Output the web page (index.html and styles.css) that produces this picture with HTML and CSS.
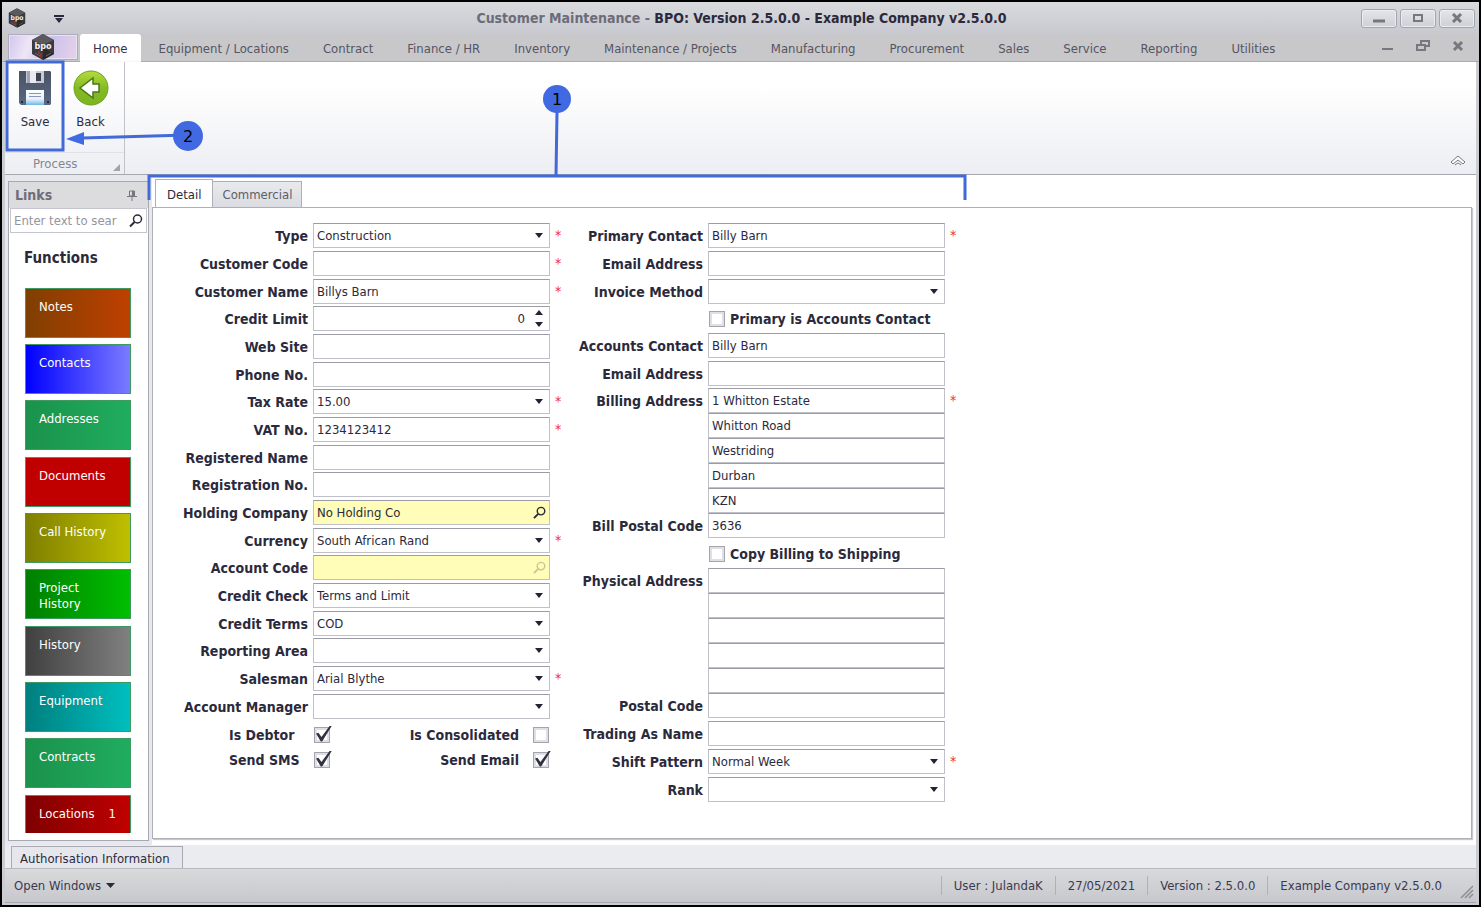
FILE: index.html
```html
<!DOCTYPE html>
<html lang="en">
<head>
    <meta charset="UTF-8">
    <meta name="viewport" content="width=device-width, initial-scale=1.0">
    <title>Customer Maintenance - BPO: Version 2.5.0.0</title>
    <link rel="stylesheet" href="styles.css">
</head>
<body>
    <!-- Shared icons -->
    <svg class="sprite" width="0" height="0" aria-hidden="true">
        <symbol id="logo" viewBox="0 0 24 26">
            <polygon points="12,0 23,6 23,20 12,26 1,20 1,6" fill="#3b3a3e"/>
            <polygon points="12,0 23,6 12,11 1,6" fill="#5b595d"/>
            <polygon points="12,14 23,20 12,26" fill="#2a292c"/>
            <path d="M4 19l5 3M15 22l5-3" stroke="#69676b"/>
            <path d="M8 17v3M10 19v4" stroke="#a02a2a" stroke-width="2"/>
        </symbol>
        <symbol id="search" viewBox="0 0 14 14">
            <circle cx="8.5" cy="5" r="4" fill="none" stroke="currentColor" stroke-width="1.5"/>
            <path d="M5.5 8L1 12.5" stroke="currentColor" stroke-width="2"/>
        </symbol>
    </svg>

    <div class="window">
        <header class="titlebar">
            <div class="quick">
                <svg class="quick-logo" viewBox="0 0 24 26">
                    <use href="#logo" width="24" height="26"/>
                    <text x="12" y="15" text-anchor="middle">bpo</text>
                </svg>
                <button class="quick-menu" aria-label="Customise toolbar">
                    <svg width="10" height="8"><path d="M0 0h10v2H0zM1 3h8L5 8z" fill="#2b2a3c"/></svg>
                </button>
            </div>
            <h1 class="title"><span>Customer Maintenance -</span> BPO: Version 2.5.0.0 - Example Company v2.5.0.0</h1>
            <div class="window-buttons">
                <button aria-label="Minimise"><svg width="12" height="10"><path d="M0 8h12" stroke="#77777f" stroke-width="3"/></svg></button>
                <button aria-label="Maximise"><svg width="12" height="10"><rect x="2" y="2" width="8" height="6" fill="none" stroke="#77777f" stroke-width="2"/></svg></button>
                <button aria-label="Close"><svg width="12" height="10"><path d="M2 1l8 8M10 1l-8 8" stroke="#77777f" stroke-width="3"/></svg></button>
            </div>
        </header>

        <nav class="tabs">
            <button class="app-button" aria-label="Application menu">
                <svg viewBox="0 0 24 26">
                    <use href="#logo" width="24" height="26"/>
                    <text x="12" y="15" text-anchor="middle">bpo</text>
                </svg>
            </button>
            <a class="tab active" href="#">Home</a>
            <a class="tab" href="#">Equipment / Locations</a>
            <a class="tab" href="#">Contract</a>
            <a class="tab" href="#">Finance / HR</a>
            <a class="tab" href="#">Inventory</a>
            <a class="tab" href="#">Maintenance / Projects</a>
            <a class="tab" href="#">Manufacturing</a>
            <a class="tab" href="#">Procurement</a>
            <a class="tab" href="#">Sales</a>
            <a class="tab" href="#">Service</a>
            <a class="tab" href="#">Reporting</a>
            <a class="tab" href="#">Utilities</a>
            <div class="child-buttons">
                <button aria-label="Minimise child"><svg width="14" height="12"><path d="M1 9h11" stroke="#77777f" stroke-width="2"/></svg></button>
                <button aria-label="Restore child"><svg width="14" height="12"><path d="M5 4V1h8v5h-3M1 5h8v5H1z" fill="none" stroke="#77777f" stroke-width="2"/></svg></button>
                <button aria-label="Close child"><svg width="14" height="12"><path d="M3 2l8 8M11 2l-8 8" stroke="#77777f" stroke-width="3"/></svg></button>
            </div>
        </nav>

        <section class="ribbon">
            <div class="group">
                <div class="group-buttons">
                    <button class="tool">
                        <svg width="34" height="36" viewBox="0 0 34 36">
                            <defs>
                                <linearGradient id="disk" x2="0" y2="1"><stop stop-color="#4b5263"/><stop offset="1" stop-color="#596985"/></linearGradient>
                                <linearGradient id="paper" x2="0" y2="1"><stop stop-color="#fff"/><stop offset=".6" stop-color="#e9f3fa"/><stop offset="1" stop-color="#6fb6e4"/></linearGradient>
                            </defs>
                            <path d="M1 1h31l1 1v32l-1 1H3l-2-2z" fill="url(#disk)"/>
                            <path d="M8 1h18v12H8z" fill="#c6cad4"/>
                            <path d="M9 1h9v12H9z" fill="#9da4b5"/>
                            <path d="M12 1h6v12h-6z" fill="#e8eaf0"/>
                            <path d="M18 3h5v8h-5z" fill="#3c4254"/>
                            <path d="M8 20h18v15H8z" fill="url(#paper)"/>
                            <path d="M11 23.5h12M11 26.500h12" stroke="#8f93c0"/>
                            <path d="M3 31h2v2H3zM29 31h2v2h-2z" fill="#252a38"/>
                        </svg>
                        Save
                    </button>
                    <button class="tool">
                        <svg width="36" height="36" viewBox="0 0 36 36">
                            <defs><linearGradient id="green" x2="0" y2="1"><stop stop-color="#b5dc3c"/><stop offset=".5" stop-color="#84bb25"/><stop offset="1" stop-color="#7db51f"/></linearGradient></defs>
                            <circle cx="18" cy="18" r="17" fill="url(#green)" stroke="#6f9f25"/>
                            <path d="M7 18L20 8v6h6v8h-6v6z" fill="#fff" stroke="#4c7719" stroke-width="1.5"/>
                        </svg>
                        Back
                    </button>
                </div>
                <div class="group-name">Process <svg width="7" height="7"><path d="M7 0v7H0z" fill="#a2a3a9"/></svg></div>
            </div>
            <button class="collapse" aria-label="Collapse ribbon">
                <svg width="16" height="12"><path d="M1 8l7-6 7 6-2 2-5-4-5 4zM5 11l3-2 3 2" fill="#fff" stroke="#77787f"/></svg>
            </button>
        </section>

        <main class="workspace">
            <aside class="links">
                <div class="links-head">Links
                    <svg width="10" height="11"><path d="M2.500 1h5v5h-5zM0 6.500h10M5 7v4" fill="none" stroke="#77787f"/><path d="M5 1h3v5H5z" fill="#77787f"/></svg>
                </div>
                <div class="search">
                    <input type="text" placeholder="Enter text to sear" aria-label="Search links">
                    <svg width="14" height="14"><use href="#search"/></svg>
                </div>
                <h2>Functions</h2>
                <div class="tiles">
                    <button class="tile brown">Notes</button>
                    <button class="tile blue">Contacts</button>
                    <button class="tile green">Addresses</button>
                    <button class="tile red">Documents</button>
                    <button class="tile olive">Call History</button>
                    <button class="tile lime">Project History</button>
                    <button class="tile grey">History</button>
                    <button class="tile teal">Equipment</button>
                    <button class="tile green">Contracts</button>
                    <button class="tile darkred">Locations <span>1</span></button>
                </div>
            </aside>

            <section class="page">
                <div class="page-tabs">
                    <button class="page-tab active">Detail</button>
                    <button class="page-tab">Commercial</button>
                </div>
                <form class="form">
                    <div class="column">
                        <div class="field required"><label for="type">Type</label><div class="box drop"><select id="type"><option>Construction</option></select></div></div>
                        <div class="field required"><label for="code">Customer Code</label><div class="box"><input id="code" type="text"></div></div>
                        <div class="field required"><label for="name">Customer Name</label><div class="box"><input id="name" type="text" value="Billys Barn"></div></div>
                        <div class="field"><label for="limit">Credit Limit</label><div class="box spin"><input id="limit" type="text" value="0"></div></div>
                        <div class="field"><label for="web">Web Site</label><div class="box"><input id="web" type="text"></div></div>
                        <div class="field"><label for="phone">Phone No.</label><div class="box"><input id="phone" type="text"></div></div>
                        <div class="field required"><label for="tax">Tax Rate</label><div class="box drop"><select id="tax"><option>15.00</option></select></div></div>
                        <div class="field required"><label for="vat">VAT No.</label><div class="box"><input id="vat" type="text" value="1234123412"></div></div>
                        <div class="field"><label for="regname">Registered Name</label><div class="box"><input id="regname" type="text"></div></div>
                        <div class="field"><label for="regno">Registration No.</label><div class="box"><input id="regno" type="text"></div></div>
                        <div class="field"><label for="holding">Holding Company</label><div class="box lookup"><input id="holding" type="text" value="No Holding Co"><svg width="14" height="14"><use href="#search"/></svg></div></div>
                        <div class="field required"><label for="currency">Currency</label><div class="box drop"><select id="currency"><option>South African Rand</option></select></div></div>
                        <div class="field"><label for="account">Account Code</label><div class="box lookup off"><input id="account" type="text"><svg width="14" height="14"><use href="#search"/></svg></div></div>
                        <div class="field"><label for="check">Credit Check</label><div class="box drop"><select id="check"><option>Terms and Limit</option></select></div></div>
                        <div class="field"><label for="terms">Credit Terms</label><div class="box drop"><select id="terms"><option>COD</option></select></div></div>
                        <div class="field"><label for="area">Reporting Area</label><div class="box drop"><select id="area"><option></option></select></div></div>
                        <div class="field required"><label for="salesman">Salesman</label><div class="box drop"><select id="salesman"><option>Arial Blythe</option></select></div></div>
                        <div class="field"><label for="manager">Account Manager</label><div class="box drop"><select id="manager"><option></option></select></div></div>
                        <div class="flags">
                            <label class="first" for="debtor">Is Debtor</label><input id="debtor" type="checkbox" checked>
                            <label for="consolidated">Is Consolidated</label><input id="consolidated" type="checkbox">
                            <label class="first" for="sms">Send SMS</label><input id="sms" type="checkbox" checked>
                            <label for="mail">Send Email</label><input id="mail" type="checkbox" checked>
                        </div>
                    </div>

                    <div class="column second">
                        <div class="field required"><label for="primary">Primary Contact</label><div class="box"><input id="primary" type="text" value="Billy Barn"></div></div>
                        <div class="field"><label for="email1">Email Address</label><div class="box"><input id="email1" type="text"></div></div>
                        <div class="field"><label for="invoice">Invoice Method</label><div class="box drop"><select id="invoice"><option></option></select></div></div>
                        <div class="field tick"><input id="same" type="checkbox"><label for="same">Primary is Accounts Contact</label></div>
                        <div class="field"><label for="accounts">Accounts Contact</label><div class="box"><input id="accounts" type="text" value="Billy Barn"></div></div>
                        <div class="field"><label for="email2">Email Address</label><div class="box"><input id="email2" type="text"></div></div>
                        <div class="stack">
                            <div class="field required"><label for="bill1">Billing Address</label><div class="box"><input id="bill1" type="text" value="1 Whitton Estate"></div></div>
                            <div class="field"><span></span><div class="box"><input type="text" value="Whitton Road" aria-label="Billing address line 2"></div></div>
                            <div class="field"><span></span><div class="box"><input type="text" value="Westriding" aria-label="Billing address line 3"></div></div>
                            <div class="field"><span></span><div class="box"><input type="text" value="Durban" aria-label="Billing address line 4"></div></div>
                            <div class="field"><span></span><div class="box"><input type="text" value="KZN" aria-label="Billing address line 5"></div></div>
                            <div class="field"><label for="billcode">Bill Postal Code</label><div class="box"><input id="billcode" type="text" value="3636"></div></div>
                        </div>
                        <div class="field tick"><input id="copy" type="checkbox"><label for="copy">Copy Billing to Shipping</label></div>
                        <div class="stack">
                            <div class="field"><label for="phys1">Physical Address</label><div class="box"><input id="phys1" type="text"></div></div>
                            <div class="field"><span></span><div class="box"><input type="text" aria-label="Physical address line 2"></div></div>
                            <div class="field"><span></span><div class="box"><input type="text" aria-label="Physical address line 3"></div></div>
                            <div class="field"><span></span><div class="box"><input type="text" aria-label="Physical address line 4"></div></div>
                            <div class="field"><span></span><div class="box"><input type="text" aria-label="Physical address line 5"></div></div>
                            <div class="field"><label for="postal">Postal Code</label><div class="box"><input id="postal" type="text"></div></div>
                        </div>
                        <div class="field"><label for="trading">Trading As Name</label><div class="box"><input id="trading" type="text"></div></div>
                        <div class="field required"><label for="shift">Shift Pattern</label><div class="box drop"><select id="shift"><option>Normal Week</option></select></div></div>
                        <div class="field"><label for="rank">Rank</label><div class="box drop"><select id="rank"><option></option></select></div></div>
                    </div>
                </form>
            </section>
        </main>

        <div class="dock"><button>Authorisation Information</button></div>

        <footer class="status">
            <button class="open-windows">Open Windows <svg width="9" height="5"><path d="M0 0h9L4.5 5z" fill="#2b2a3c"/></svg></button>
            <span>User : JulandaK</span>
            <span>27/05/2021</span>
            <span>Version : 2.5.0.0</span>
            <span>Example Company v2.5.0.0</span>
            <svg class="grip" width="14" height="14"><path d="M1 13L13 1M5 13l8-8M9 13l4-4" stroke="#8d8e95" stroke-width="1.5"/></svg>
        </footer>
    </div>

    <!-- Numbered callouts over the window -->
    <svg class="callouts" width="970" height="210">
        <g fill="none" stroke="#4169d8" stroke-width="3">
            <rect x="7" y="62" width="56" height="88"/>
            <path d="M149 200V176H965V200M557 112L556 176M188 135L82 138"/>
        </g>
        <g fill="#4169e1">
            <path d="M66 139l18-7v13z"/>
            <circle cx="557" cy="99" r="14"/>
            <circle cx="188" cy="136" r="15"/>
        </g>
        <g text-anchor="middle">
            <text x="557" y="105">1</text>
            <text x="188" y="142">2</text>
        </g>
    </svg>
</body>
</html>
```
FILE: styles.css
```css
* {
    margin: 0;
    padding: 0;
    box-sizing: border-box;
}

body {
    font-family: "DejaVu Sans Condensed", "Noto Sans", sans-serif;
    font-size: 13px;
    color: #2b2a3c;
    background: #000;
    height: 100vh;
    padding: 2px;
}

button,
input,
select {
    font: inherit;
    color: inherit;
    background: none;
    border: none;
    border-radius: 0;
    outline: none;
}

a {
    color: inherit;
    text-decoration: none;
}

.sprite {
    position: absolute;
}

.window {
    display: flex;
    flex-direction: column;
    height: 100%;
    padding: 0 3px 2px;
    background: #cbccd2;
}

/* Title bar */
.titlebar {
    display: grid;
    grid-template-columns: 1fr auto 1fr;
    align-items: center;
    flex: none;
    height: 32px;
    margin: 0 -3px;
    padding: 0 4px 0 6px;
    background: linear-gradient(#d9dadd, #c8c9d0);
}

.quick {
    display: flex;
    align-items: center;
    gap: 28px;
}

.quick-logo {
    width: 18px;
    height: 20px;
}

.quick-logo text,
.app-button text {
    font-size: 9px;
    font-weight: bold;
    fill: #f2f2f2;
}

.title {
    font-size: 14px;
    font-weight: bold;
}

.title span {
    color: #6c6c79;
}

.window-buttons {
    display: flex;
    justify-content: flex-end;
    gap: 3px;
}

.window-buttons button {
    width: 36px;
    height: 19px;
    border: 1px solid #a3a5ae;
    border-radius: 3px;
    background: linear-gradient(#e4e5e9, #ced0d7);
    box-shadow: inset 0 0 0 1px #ebecf0;
}

/* Ribbon tabs */
.tabs {
    display: flex;
    flex: none;
    height: 28px;
    margin: 0 -3px;
    padding-left: 6px;
    background: #c8c8ca;
    border-bottom: 1px solid #a3a4ae;
    color: #555563;
}

.app-button {
    width: 70px;
    height: 26px;
    margin-right: 2px;
    border: 1px solid #aeabba;
    background: linear-gradient(110deg, #d2c5ed, #eee6f7 30%, #ccc3ea 60%, #e8d1ea);
    box-shadow: inset 0 0 0 1px #e8e3f1;
}

.app-button svg {
    width: 24px;
    height: 26px;
    margin-top: -1px;
}

.tab {
    padding: 0 17px;
    line-height: 30px;
    white-space: nowrap;
}

.tab.active {
    height: 28px;
    padding: 0 13px;
    margin-right: 1px;
    background: #fff;
    border-radius: 3px 3px 0 0;
    color: #33324a;
}

.child-buttons {
    display: flex;
    align-items: center;
    gap: 21px;
    margin-left: auto;
    padding-right: 14px;
}

/* Ribbon */
.ribbon {
    display: flex;
    flex: none;
    height: 113px;
    background: linear-gradient(#fff 20%, #edeef3);
    border-bottom: 1px solid #a6a8b0;
    box-shadow: 0 1px 3px #d0d1d6;
}

.group {
    display: flex;
    flex-direction: column;
    width: 120px;
    border-right: 1px solid #c1c3c9;
}

.group-buttons {
    display: flex;
    flex: 1;
    border-bottom: 1px solid #e0e1e6;
}

.tool {
    display: flex;
    flex-direction: column;
    align-items: center;
    gap: 8px;
    width: 57px;
    padding-top: 8px;
}

.tool:first-child {
    padding-left: 3px;
}

.group-name {
    display: flex;
    align-items: flex-end;
    justify-content: space-between;
    height: 21px;
    padding: 0 4px 3px 28px;
    color: #85868f;
}

.collapse {
    align-self: flex-end;
    margin-left: auto;
    padding: 0 10px 5px 0;
}

/* Workspace */
.workspace {
    display: flex;
    flex: 1;
    min-height: 0;
    background: #e7e8ed;
}

.links {
    display: flex;
    flex-direction: column;
    width: 141px;
    margin: 6px 3px 4px;
    padding-bottom: 7px;
    overflow: hidden;
    background: #fff;
    border: 1px solid #a7a8b0;
}

.links-head {
    display: flex;
    align-items: center;
    justify-content: space-between;
    flex: none;
    height: 26px;
    padding: 0 11px 0 6px;
    background: #dcdcdf;
    color: #6d6d78;
    font-size: 14px;
    font-weight: bold;
}

.search {
    display: flex;
    align-items: center;
    flex: none;
    height: 25px;
    margin: 0 1px;
    padding: 0 3px;
    border: 1px solid #c5c6cd;
}

.search input {
    flex: 1;
    min-width: 0;
}

.search input::placeholder {
    color: #94949f;
}

.links h2 {
    font-size: 15px;
    line-height: 16px;
    margin: 17px 15px 0;
}

.tiles {
    flex: 1;
    min-height: 0;
    overflow: hidden;
    margin: 22px 16px 0;
}

.tile {
    display: flex;
    align-items: flex-start;
    justify-content: space-between;
    width: 106px;
    height: 50px;
    margin-bottom: 6px;
    padding: 10px 14px 0 13px;
    border: 1px solid #3f9a62;
    color: #fff;
    text-align: left;
    line-height: 16px;
}

.tile:nth-child(3n) {
    margin-bottom: 7px;
}

.brown { background: linear-gradient(90deg, #7f3f00, #bf4000); }
.blue { background: linear-gradient(90deg, #0000ff, #7b7bff); }
.green { background: linear-gradient(90deg, #1a924b, #20ad5f); }
.red { background: #c00000; }
.olive { background: linear-gradient(90deg, #7f7f00, #bfbf00); }
.lime { background: linear-gradient(90deg, #007f00, #00bf00); }
.grey { background: linear-gradient(90deg, #404040, #808080); }
.teal { background: linear-gradient(90deg, #007f7f, #00bfbf); }
.darkred { background: linear-gradient(90deg, #7f0000, #c00000); }

/* Page with tabs */
.page {
    display: flex;
    flex-direction: column;
    flex: 1;
    padding: 4px 4px 6px 0;
    background: #fff;
}

.page-tabs {
    display: flex;
    align-items: flex-end;
    height: 28px;
    padding-left: 3px;
}

.page-tab {
    height: 26px;
    padding: 0 9px;
    border: 1px solid #aeafb7;
    border-bottom: none;
    background: linear-gradient(#e9eaee, #dbdce1);
    color: #5d5d6b;
}

.page-tab.active {
    height: 29px;
    margin: 0 -1px -1px 0;
    padding: 0 11px;
    background: #fff;
    color: #2b2a3c;
}

.form {
    display: flex;
    flex: 1;
    padding-top: 15px;
    border: 1px solid #aeafb7;
    box-shadow: 1px 1px 1px #c7c8ce;
}

/* Fields: label, box and the required star */
.column {
    width: 411px;
}

.field {
    display: grid;
    grid-template-columns: 155px 237px 12px;
    gap: 5px;
    height: 25px;
    margin-bottom: 3px;
    align-items: center;
}

.second .field {
    grid-template-columns: 139px 237px 12px;
}

.field:nth-child(3n) {
    margin-bottom: 2px;
}

.field label,
.flags label {
    font-size: 14px;
    font-weight: bold;
    text-align: right;
    white-space: nowrap;
}

.required::after {
    content: "*";
    padding-bottom: 2px;
    color: #f02c38;
    font-size: 14px;
}

.box {
    display: flex;
    align-items: center;
    position: relative;
    height: 25px;
    border: 1px solid #bfc0c8;
    border-top-color: #9b9ca6;
}

.box input,
.box select {
    appearance: none;
    width: 100%;
    height: 23px;
    padding: 0 3px;
}

.drop::after,
.spin::before,
.spin::after {
    content: "";
    position: absolute;
    right: 6px;
    top: 9px;
    border: 4px solid transparent;
    border-top: 5px solid #232235;
    border-bottom: none;
    pointer-events: none;
}

.spin::before {
    top: 3px;
    border-top: none;
    border-bottom: 5px solid #232235;
}

.spin::after {
    top: 15px;
}

.spin input {
    padding-right: 24px;
    text-align: right;
}

.lookup {
    background: #fffdb8;
    padding-right: 3px;
}

.lookup.off svg {
    opacity: .25;
}

.stack {
    margin-bottom: 3px;
}

.stack .field {
    margin-bottom: 0;
}

.second .tick {
    display: flex;
    padding-left: 145px;
    margin-bottom: 2px;
}

/* Tick boxes */
input[type="checkbox"] {
    appearance: none;
    position: relative;
    width: 16px;
    height: 16px;
    border: 1px solid #a4a5ac;
    background: #fff;
    box-shadow: inset 0 0 0 2px #dfe0e5;
}

input[type="checkbox"]:checked::before {
    content: "";
    position: absolute;
    left: 0;
    top: -2px;
    width: 17px;
    height: 16px;
    background: #333240;
    clip-path: polygon(6% 50%, 20% 45%, 38% 72%, 88% 0, 100% 0, 42% 100%, 34% 100%);
}

.flags {
    display: grid;
    grid-template-columns: 147px 16px 175px 16px;
    grid-auto-rows: 25px;
    column-gap: 14px;
    align-items: center;
    margin-top: 3px;
}

.flags .first {
    padding-left: 76px;
    text-align: left;
}

/* Bottom bars */
.dock {
    display: flex;
    align-items: flex-end;
    flex: none;
    height: 23px;
    padding-left: 6px;
    background: #ebecf0;
}

.dock button {
    height: 22px;
    padding: 2px 12px 0 8px;
    border: 1px solid #a9aab3;
    border-bottom: none;
    background: #e6e7ec;
}

.status {
    display: flex;
    align-items: center;
    flex: none;
    height: 35px;
    background: linear-gradient(#d9d9dc, #c7c8cd);
    border-top: 1px solid #b9bac0;
    border-bottom: 1px solid #a5a7b2;
    color: #3a3950;
}

.status span {
    padding: 2px 12px;
    border-left: 1px solid #afb0b8;
}

.open-windows {
    display: flex;
    align-items: center;
    gap: 5px;
    margin-right: auto;
    padding-left: 9px;
}

.grip {
    align-self: flex-end;
    margin: 0 2px 3px 6px;
}

.callouts {
    position: absolute;
    left: 0;
    top: 0;
    pointer-events: none;
    font-family: "DejaVu Sans", sans-serif;
    font-size: 16px;
}
```
